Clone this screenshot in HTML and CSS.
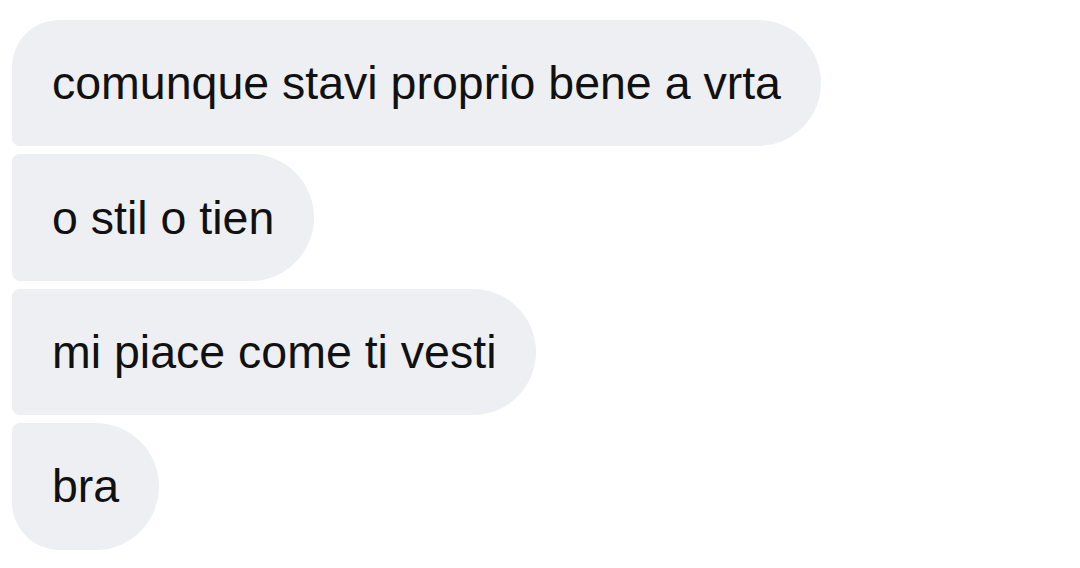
FILE: index.html
```html
<!DOCTYPE html>
<html>
<head>
<meta charset="utf-8">
<link rel="stylesheet" href="styles.css">
</head>
<body>
<div class="thread">
  <div class="bubble first">comunque stavi proprio bene a vrta</div>
  <div class="bubble">o stil o tien</div>
  <div class="bubble">mi piace come ti vesti</div>
  <div class="bubble last">bra</div>
</div>
</body>
</html>
```
FILE: styles.css
```css
html, body {
  margin: 0;
  padding: 0;
  background: #ffffff;
}
body {
  width: 1080px;
  height: 568px;
  overflow: hidden;
  font-family: "Liberation Sans", Arial, sans-serif;
}
.thread {
  display: flex;
  flex-direction: column;
  align-items: flex-start;
  gap: 8px;
  padding: 20px 12px;
}
.bubble {
  box-sizing: border-box;
  height: 126.4px;
  display: flex;
  align-items: center;
  padding: 0 40px;
  background: #eeeff3;
  color: #111111;
  font-size: 46.5px;
  white-space: nowrap;
  border-radius: 8px 64px 64px 8px;
}
.bubble.first {
  border-top-left-radius: 48px;
}
.bubble.last {
  border-bottom-left-radius: 48px;
}
```
